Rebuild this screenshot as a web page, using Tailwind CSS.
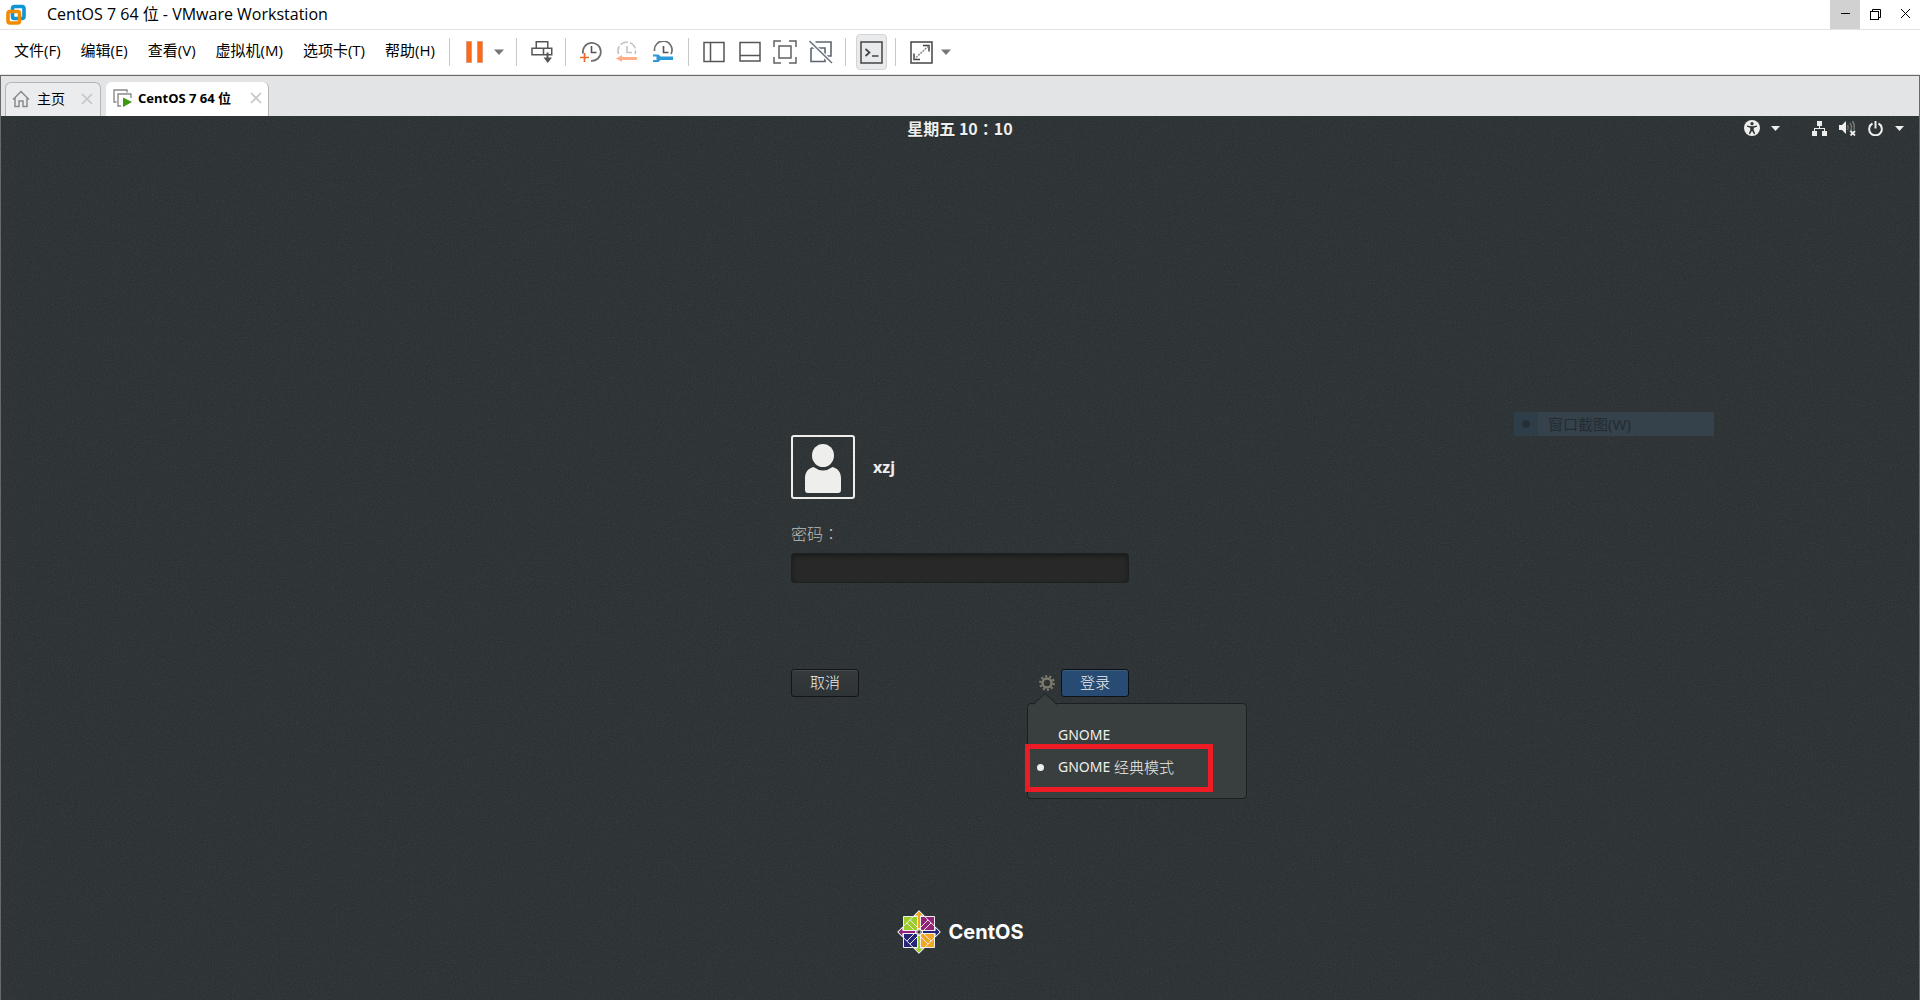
<!DOCTYPE html>
<html lang="zh-CN">
<head>
<meta charset="utf-8">
<title>CentOS 7 64 位 - VMware Workstation</title>
<script src="https://cdn.jsdelivr.net/npm/@tailwindcss/browser@4"></script>
</head>
<body class="flex min-h-screen flex-col bg-white font-['Open_Sans','Noto_Sans_CJK_SC',sans-serif] text-black">

<!-- Title bar -->
<header class="flex h-[30px] items-stretch border-b border-[#e3e3e3] pl-1.5">
  <svg class="mt-1 h-[22px] w-[21px] shrink-0" viewBox="0 0 21 22" fill="none">
    <rect x="6.5" y="2.5" width="11.5" height="12" rx="2" stroke="#0f95d4" stroke-width="3.6"/>
    <rect x="2" y="7.5" width="11.5" height="11.5" rx="2" stroke="#f38b00" stroke-width="3.6"/>
    <path d="M6.5 10v2.5a2 2 0 0 0 2 2H11" stroke="#0f95d4" stroke-width="3"/>
  </svg>
  <h1 class="ml-5 text-[16px] leading-[29px]">CentOS 7 64 位 - VMware Workstation</h1>
  <div class="ml-auto flex">
    <button class="flex w-[30px] items-center justify-center bg-[#d1d1d1]" aria-label="最小化"><svg class="size-[11px]" viewBox="0 0 11 11"><path d="M1 4.5h9" stroke="#000"/></svg></button>
    <button class="flex w-[30px] items-center justify-center" aria-label="还原"><svg class="size-[13px]" viewBox="0 0 13 13" fill="none" stroke="#000"><path d="M3.500 3V1.500h8v8H10"/><rect x="1.500" y="3.500" width="8" height="8"/></svg></button>
    <button class="flex w-[30px] items-center justify-center" aria-label="关闭"><svg class="size-[11px]" viewBox="0 0 11 11"><path d="M1 0l9 9M10 0L1 9" stroke="#000"/></svg></button>
  </div>
</header>

<!-- Menu and toolbar -->
<div class="flex h-[45px] items-center border-b border-[#e3e3e3] pb-1 pl-3.5">
  <nav class="flex gap-5 text-[15px] leading-5 whitespace-nowrap">
    <a href="#">文件(F)</a><a href="#">编辑(E)</a><a href="#">查看(V)</a><a href="#">虚拟机(M)</a><a href="#">选项卡(T)</a><a href="#">帮助(H)</a>
  </nav>
  <div class="ml-3.5 flex items-center pt-1" role="toolbar">
    <span class="h-7 w-px bg-[#c8c8c8]"></span>
    <button class="ml-4 flex" aria-label="挂起"><svg class="h-[22px] w-[18px]" viewBox="0 0 18 22" fill="#fd6a1c" stroke="#c98763" stroke-width=".6"><path d="M.5.500h5v21h-5zM11.500.500h5v21h-5z"/></svg></button>
    <button class="ml-2.5 flex" aria-label="电源选项"><svg class="h-1.5 w-2.5" viewBox="0 0 10 6"><path d="M0 .5h10L5 6z" fill="#777"/></svg></button>
    <span class="ml-3 h-7 w-px bg-[#c8c8c8]"></span>
    <button class="ml-3.5 flex" aria-label="发送 Ctrl+Alt+Del"><svg class="size-[22px]" viewBox="0 0 22 22" fill="none" stroke="#565656" stroke-width="1.500"><path d="M5.250.75h11.500v6.500H5.250zM1 7.250h19.750v6.500H1zM12.500 7.250v6.500"/><path d="M16.500 11.500v8" stroke-width="2"/><path d="M12.500 16.500h8.500l-4.250 5.500z" fill="#565656" stroke="none"/></svg></button>
    <span class="ml-3 h-7 w-px bg-[#c8c8c8]"></span>
    <button class="ml-3.5 flex" aria-label="拍摄快照"><svg class="size-[22px]" viewBox="0 0 22 22" fill="none"><path d="M3 12.500A9 9 0 1 1 11 19.800" stroke="#6e6e6e" stroke-width="1.700"/><path d="M11.500 5v6.500h5" stroke="#555" stroke-width="1.600"/><path d="M0 16.500h9M4.500 12v9" stroke="#e8692b" stroke-width="1.700"/></svg></button>
    <button class="ml-3.5 flex" aria-label="恢复快照"><svg class="size-[22px]" viewBox="0 0 22 22" fill="none"><path d="M2.500 13A8.800 8.800 0 1 1 19 13" stroke="#c4c4c4" stroke-width="1.600" stroke-dasharray="8 2"/><path d="M11 5v6.500h5" stroke="#c4c4c4" stroke-width="1.600"/><path d="M6 14v2h15v3H6v2L0 17.500z" fill="#ffb08b"/></svg></button>
    <button class="ml-3.5 flex" aria-label="管理快照"><svg class="size-[22px]" viewBox="0 0 22 22" fill="none"><path d="M2.500 10A8.800 8.800 0 1 1 19 13" stroke="#6e6e6e" stroke-width="1.700"/><path d="M11.500 5v6.500h5" stroke="#555" stroke-width="1.600"/><path d="M1 13.500h5.500l2 2H21v3.500H8.500l-2 2H1v-2h3.500v-3.500H1z" fill="#2c9ad9"/></svg></button>
    <span class="ml-3.5 h-7 w-px bg-[#c8c8c8]"></span>
    <button class="ml-3.5 flex" aria-label="显示库"><svg class="size-[22px]" viewBox="0 0 22 22" fill="none" stroke="#565656" stroke-width="1.500"><path d="M1 1.500h20v19H1zM7.500 1.500v19"/></svg></button>
    <button class="ml-3.5 flex" aria-label="缩略图栏"><svg class="size-[22px]" viewBox="0 0 22 22" fill="none" stroke="#565656" stroke-width="1.500"><path d="M1 1.500h20v18.500H1zM1 14.500h20"/></svg></button>
    <button class="ml-3 flex" aria-label="全屏"><svg class="size-6" viewBox="0 0 24 24" fill="none" stroke="#626262" stroke-width="1.500"><path d="M1 7V1h7M16 1h7v6M23 17v6h-7M8 23H1v-6M6 6h12v12H6z"/></svg></button>
    <button class="ml-3 flex" aria-label="Unity"><svg class="size-6" viewBox="0 0 24 24" fill="none" stroke="#5c6670" stroke-width="1.600"><path d="M6.500 2H22v14h-4M2 8v13.500h14v-3M2 8h3M8 8h8v7"/><path d="M0 1l23 22" stroke="#fff" stroke-width="4"/><path d="M.5 1L23 23" stroke="#6f7a85"/></svg></button>
    <span class="ml-3 h-7 w-px bg-[#c8c8c8]"></span>
    <button class="ml-2.5 flex h-9 w-[31px] items-center justify-center rounded border border-[#d4d4d4] bg-[#e9eaeb]" aria-label="控制台视图"><svg class="size-[23px] shrink-0" viewBox="0 0 23 23" fill="none" stroke="#444" stroke-width="1.500"><path d="M1 1h21v21H1z"/><path d="M5.500 8l4 3.500-4 3.500M12 15h6.500" stroke-width="1.700"/></svg></button>
    <span class="ml-2 h-7 w-px bg-[#c8c8c8]"></span>
    <button class="ml-3.5 flex" aria-label="拉伸客户机"><svg class="size-[23px]" viewBox="0 0 23 23" fill="none" stroke="#444" stroke-width="1.500"><path d="M1 1h21v21H1z"/><path d="M13 4.500h6v6M4 12.500v6h6"/><path d="M18.500 5L4.500 18" stroke="#8a8a8a" stroke-dasharray="2 1"/></svg></button>
    <button class="ml-2 flex" aria-label="拉伸选项"><svg class="h-1.5 w-2.5" viewBox="0 0 10 6"><path d="M0 .5h10L5 6z" fill="#777"/></svg></button>
  </div>
</div>

<div class="flex flex-1 flex-col border-x border-t border-[#696969]">
  <!-- Tabs -->
  <div class="flex h-10 items-end gap-[5px] bg-[#e3e4e6] pl-1 text-[14px]">
    <div class="flex h-[34px] w-24 items-center rounded-t-md border border-b-0 border-[#b4b5b7] bg-[#ebecee] pb-0.5 pl-1.5">
      <svg class="size-[18px]" viewBox="0 0 18 18" fill="none" stroke="#8b8b8b" stroke-width="1.500"><path d="M1 9.500L9 1.500l8 8M3 8v8.500h4V11h4v5.500h4V8"/></svg>
      <a href="#" class="ml-[7px] leading-5">主页</a>
      <button class="ml-4 flex" aria-label="关闭主页"><svg class="size-3" viewBox="0 0 12 12"><path d="M1 1l10 10M11 1L1 11" stroke="#c6c6c6" stroke-width="1.700"/></svg></button>
    </div>
    <div class="flex h-[34px] w-[163px] items-center rounded-t-md border-r border-[#b4b5b7] bg-white pb-0.5 pl-[7px]">
      <svg class="h-[18px] w-[19px]" viewBox="0 0 19 18" fill="none" stroke="#8b8b8b" stroke-width="1.400"><path d="M3.500 13H1V1h13v2.500M8 17H5V5h13v4"/><path d="M10 8.500l9 4.500-9 5z" fill="#3c9a12" stroke="none"/></svg>
      <a href="#" class="ml-1.5 w-[100px] font-['Noto_Sans','Noto_Sans_CJK_SC',sans-serif] text-[13px] leading-5 font-bold whitespace-nowrap">CentOS 7 64 位</a>
      <button class="ml-3 flex" aria-label="关闭 CentOS 7"><svg class="size-3" viewBox="0 0 12 12"><path d="M1 1l10 10M11 1L1 11" stroke="#c6c6c6" stroke-width="1.700"/></svg></button>
    </div>
  </div>

  <!-- Guest display -->
  <main class="relative isolate flex flex-1 flex-col items-center bg-[#282e30] font-['Noto_Sans','Noto_Sans_CJK_SC',sans-serif]">
    <svg class="absolute inset-0 -z-10 size-full opacity-10" aria-hidden="true">
      <filter id="grain"><feTurbulence type="fractalNoise" baseFrequency=".7" numOctaves="2"/><feColorMatrix type="saturate" values="0"/></filter>
      <rect width="100%" height="100%" filter="url(#grain)"/>
    </svg>

    <div class="grid h-6 w-full grid-cols-3 items-center text-[#eeeeec]">
      <time class="col-start-2 text-center font-['Noto_Sans_CJK_SC',sans-serif] text-[16px] leading-6 font-bold text-shadow-xs">星期五 10<span lang="zh-Hant" class="font-['Noto_Sans_CJK_TC',sans-serif]">：</span>10</time>
      <div class="flex items-center justify-end pr-[15px]">
        <button class="flex" aria-label="辅助功能"><svg class="size-4" viewBox="0 0 16 16"><circle cx="8" cy="8" r="8" fill="#eeeeec"/><g fill="#2e3436"><circle cx="8" cy="3.700" r="1.600"/><path d="M3 5.500l4 .8h2l4-.8v1.300l-3.300 1V10l1.500 3.700-1.200.5L8 10.700l-2 3.500-1.200-.5L6.300 10V7.800L3 6.800z"/></g></svg></button>
        <svg class="mr-8 ml-[11px] h-[5px] w-[9px]" viewBox="0 0 9 5"><path d="M0 0h9L4.500 5z" fill="#eeeeec"/></svg>
        <button class="flex items-center gap-3" aria-label="系统菜单">
          <svg class="size-[15px]" viewBox="0 0 15 15" fill="#eeeeec"><path d="M5 0h5v5H8v2h5v3h2v5h-5v-5h2V8H3v2h2v5H0v-5h2V7h5V5H5z"/></svg>
          <svg class="h-4 w-[17px]" viewBox="0 0 17 16" fill="none"><path d="M0 5h3l4-4v13l-4-4H0z" fill="#eeeeec"/><path d="M8.500 5q1.500 2.500 0 5M11 3q3 4 0 9M13.500 1q2.500 4 1.500 9" stroke="#737776" stroke-width="1.500"/><path d="M11.500 11l4.500 4.500m0-4.500l-4.500 4.500" stroke="#eeeeec" stroke-width="1.800"/></svg>
          <svg class="size-[15px]" viewBox="0 0 15 15" fill="none" stroke="#eeeeec" stroke-width="2"><path d="M4.500 2.500a6.300 6.300 0 1 0 6 0M7.500 0v7.500"/></svg>
          <svg class="h-[5px] w-[9px]" viewBox="0 0 9 5"><path d="M0 0h9L4.500 5z" fill="#eeeeec"/></svg>
        </button>
      </div>
    </div>

    <form class="mt-[295px] flex w-[338px] flex-col text-[15px] text-[#eeeeec]" onsubmit="return false">
      <div class="flex items-center gap-[18px]">
        <svg class="size-16 rounded-[3px] border-2 border-[#eeeeec]" viewBox="0 0 60 60" fill="#eeeeec"><ellipse cx="30" cy="18.500" rx="11" ry="11.500"/><path d="M20.500 30q9.500 7 19 0c6 1.500 8.500 6 8.500 11v12q0 3-3 3H15q-3 0-3-3V41c0-5 2.500-9.500 8.500-11z"/></svg>
        <span class="text-[16px] leading-5 font-bold">xzj</span>
      </div>
      <label for="password" class="mt-6 text-[16px] leading-5 font-light text-[#babdb6]">密码<span lang="zh-Hant" class="font-['Noto_Sans_CJK_TC',sans-serif]">：</span></label>
      <input id="password" type="password" class="mt-[9px] h-[30px] rounded-[3px] border border-[#1d2021] bg-[#282828] px-2 shadow-[inset_0_2px_4px_#18191a] outline-none">
      <div class="mt-[86px] flex items-center">
        <button type="button" class="h-7 w-[68px] rounded-[3px] border border-[#131516] bg-linear-to-b from-[#34393b] to-[#2e3436] pb-0.5 text-[15px] leading-5 font-light shadow-[inset_0_1px_#454b4d]">取消</button>
        <div class="relative mr-1.5 ml-auto">
          <button type="button" class="flex" aria-label="会话"><svg class="size-4" viewBox="0 0 16 16" fill="none" stroke="#7d7b6c"><circle cx="8" cy="8" r="4.500" stroke-width="2.600"/><circle cx="8" cy="8" r="6.800" stroke-width="2.200" stroke-dasharray="2.100 2.172"/></svg></button>
          <div class="absolute top-7 -left-3 h-[96px] w-[220px] rounded border border-[#1c1f1f] bg-[#393f3f] pt-[21px]" role="menu">
            <svg class="absolute -top-[11px] left-[5px] h-3 w-6" viewBox="0 0 24 12"><path d="M0 12L12 .5 24 12z" fill="#393f3f"/><path d="M0 11.500L12 .5 24 11.500" fill="none" stroke="#1c1f1f"/></svg>
            <button type="button" role="menuitem" class="block pl-[30px] text-[14px] leading-5">GNOME</button>
            <button type="button" role="menuitem" class="mt-3 flex items-center pl-[9px] text-[14px] leading-5 whitespace-nowrap"><span class="mr-3.5 size-[7px] rounded-full bg-[#eeeeec]"></span>GNOME&nbsp;<span class="text-[15px] font-light">经典模式</span></button>
            <div class="pointer-events-none absolute top-10 -left-[3px] h-12 w-[188px] border-5 border-[#ed1c24]"></div>
          </div>
        </div>
        <button class="h-7 w-[68px] rounded-[3px] border border-[#0d1015] bg-[#274b73] pb-0.5 text-[15px] leading-5 font-light shadow-[inset_0_1px_#3d5d7e]">登录</button>
      </div>
    </form>

    <!-- Fading capture menu entry -->
    <div class="absolute top-[296px] right-[205px] flex h-6 w-[200px] items-center bg-[#35414b] text-[15px] text-[#252c31]">
      <span class="flex h-6 w-6 items-center justify-center bg-[#2d3e49]"><span class="size-2 rounded-full bg-[#252f36]"></span></span>
      <span class="ml-2.5 leading-6">窗口截图(W)</span>
    </div>

    <div class="mt-auto mb-[46px] flex items-center gap-2">
      <svg class="size-11" viewBox="0 0 44 44" stroke="#eeeeec" stroke-width="1">
        <path d="M6.500 6.500H21v14.500H6.500z" fill="#9ccd2a"/><path d="M23 6.500h14.500V21H23z" fill="#932279"/><path d="M6.500 23H21v14.500H6.500z" fill="#262577"/><path d="M23 23h14.500v14.500H23z" fill="#efa724"/>
        <path d="M22 .8l-5 5h3.500V21h3V5.800H27z" fill="#efa724"/><path d="M43.200 22l-5-5v3.500H23v3h15.200V27z" fill="#262577"/><path d="M22 43.200l5-5h-3.500V23h-3v15.200H17z" fill="#9ccd2a"/><path d="M.8 22l5 5v-3.500H21v-3H5.800V17z" fill="#932279"/>
        <path d="M22 .8L43.200 22 22 43.200.8 22zM13 10l9 9 9-9M13 34l9-9 9 9M10 13l9 9-9 9M34 13l-9 9 9 9" fill="none"/>
        <rect x="20" y="20" width="4" height="4" fill="#2e3436"/>
      </svg>
      <span class="font-[Inter,sans-serif] text-[20px] leading-6 font-bold text-white">CentOS</span>
    </div>
  </main>
</div>
</body>
</html>
